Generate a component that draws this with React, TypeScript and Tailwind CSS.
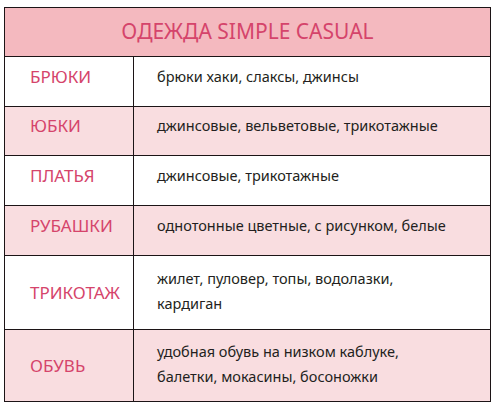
import React from "react";

const rows: { label: string; lines: string[]; pink: boolean; h: string; short: boolean }[] = [
  { label: "БРЮКИ", lines: ["брюки хаки, слаксы, джинсы"], pink: false, h: "h-[50px]", short: true },
  { label: "ЮБКИ", lines: ["джинсовые, вельветовые, трикотажные"], pink: true, h: "h-[49px]", short: true },
  { label: "ПЛАТЬЯ", lines: ["джинсовые, трикотажные"], pink: false, h: "h-[50px]", short: true },
  { label: "РУБАШКИ", lines: ["однотонные цветные, с рисунком, белые"], pink: true, h: "h-[50px]", short: true },
  { label: "ТРИКОТАЖ", lines: ["жилет, пуловер, топы, водолазки,", "кардиган"], pink: false, h: "h-[74px]", short: false },
  { label: "ОБУВЬ", lines: ["удобная обувь на низком каблуке,", "балетки, мокасины, босоножки"], pink: true, h: "h-[71px]", short: false },
];

export default function App() {
  return (
    <div className="w-[496px] h-[406px] bg-white pt-[7px] pl-[4px]" style={{ fontFamily: '"Noto Sans", "DejaVu Sans", sans-serif' }}>
      <div className="w-[487px] border-[1.5px] border-[#1c1416] flex flex-col">
        <div className="h-[49px] bg-[#f4b9bf] border-b-[1.5px] border-[#1c1416] flex items-center justify-center">
          <span className="text-[21px] text-[#d5446b] leading-none pb-[2px]">ОДЕЖДА SIMPLE CASUAL</span>
        </div>
        {rows.map((r, i) => (
          <div
            key={r.label}
            className={`flex ${r.h} ${r.pink ? "bg-[#f9dde0]" : "bg-white"} ${i < rows.length - 1 ? "border-b-[1.5px] border-[#1c1416]" : ""}`}
          >
            <div className={`w-[129px] shrink-0 border-r-[1.5px] border-[#1c1416] flex items-center pl-[25px] ${r.short ? "pb-[11px]" : ""}`}>
              <span className="text-[17px] text-[#d5446b] leading-none">{r.label}</span>
            </div>
            <div className={`flex-1 flex flex-col justify-center pl-[23px] ${r.short ? "pb-[11px]" : "pb-[4px]"}`}>
              {r.lines.map((l) => (
                <div key={l} className="text-[14.5px] text-[#231f20] leading-[25px]">
                  {l}
                </div>
              ))}
            </div>
          </div>
        ))}
      </div>
    </div>
  );
}
